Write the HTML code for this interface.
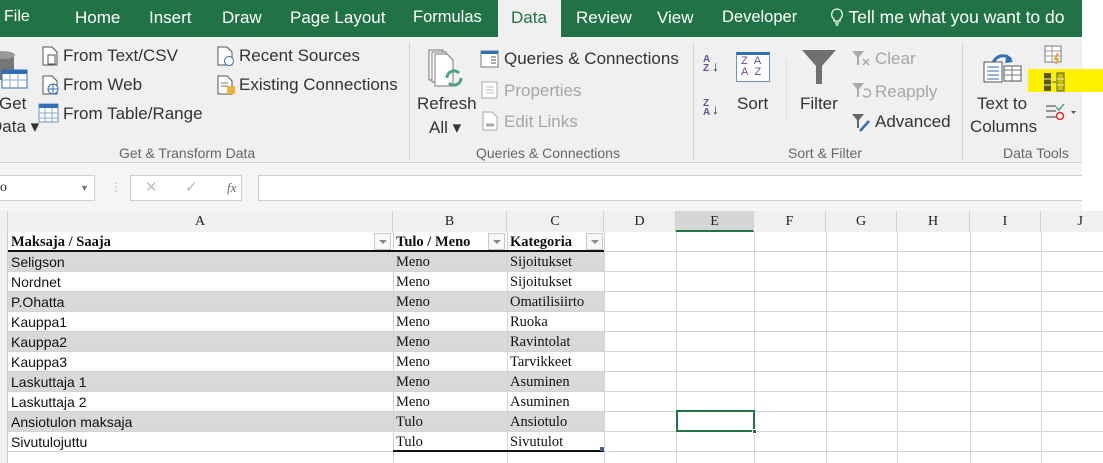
<!DOCTYPE html>
<html><head><meta charset="utf-8"><style>
*{margin:0;padding:0;box-sizing:border-box}
body{width:1103px;height:463px;overflow:hidden;background:#fff;position:relative;font-family:"Liberation Sans",sans-serif}
.a{position:absolute;white-space:nowrap}
.tab{position:absolute;top:8px;color:#fff;font-size:16px}
.rt{font-size:17px;color:#333}
.dis{color:#a6a6a6}
.gl{font-size:14px;color:#666}
.vs{position:absolute;width:1px;background:#d5d5d5;top:42px;height:118px}
.ch{position:absolute;top:211px;height:21px;font-family:"Liberation Serif",serif;font-size:14px;color:#222;text-align:center;line-height:22px;border-right:1px solid #d0d0d0;background:#f0f0f0}
.vl{position:absolute;top:232px;width:1px;height:231px;background:#d4d4d4}
.hl{position:absolute;left:8px;width:1095px;height:1px;background:#d4d4d4}
.c{position:absolute;font-size:14px;color:#111;line-height:20px;height:20px}
.ar{font-family:"Liberation Sans",sans-serif}
.sr{font-family:"Liberation Serif",serif;font-size:14.5px}
.bar{position:absolute;height:20px;background:#d9d9d9}
.dd{position:absolute;width:17px;height:17px;border:1px solid #c8c8c8;background:#f7f7f7}
.dd:after{content:"";position:absolute;left:4px;top:6px;border:4px solid transparent;border-top:4px solid #888}
</style></head><body>
<!-- tab bar -->
<div class="a" style="left:0;top:0;width:1082px;height:37px;background:#217346"></div>
<div class="a" style="left:498px;top:0;width:63px;height:38px;background:#f0f0f0"></div>
<div class="tab" style="left:4px">File</div>
<div class="tab" style="left:75px;font-size:17px">Home</div>
<div class="tab" style="left:149px;font-size:17px">Insert</div>
<div class="tab" style="left:222px;font-size:17px">Draw</div>
<div class="tab" style="left:290px;font-size:17px">Page Layout</div>
<div class="tab" style="left:413px;font-size:16.5px">Formulas</div>
<div class="tab" style="left:511px;color:#217346;font-size:17px">Data</div>
<div class="tab" style="left:576px;font-size:17px">Review</div>
<div class="tab" style="left:657px;font-size:17px">View</div>
<div class="tab" style="left:722px;font-size:16.5px">Developer</div>
<div class="tab" style="left:830px;font-size:17.5px;top:7px"><svg width="14" height="18" viewBox="0 0 14 18" style="vertical-align:-3px"><path d="M7 1a5.5 5.5 0 0 0-3 10v2h6v-2a5.5 5.5 0 0 0-3-10z" fill="none" stroke="#fff" stroke-width="1.3"/><path d="M5 15h4M5.5 17h3" stroke="#fff" stroke-width="1.2"/></svg> Tell me what you want to do</div>
<!-- ribbon -->
<div class="a" style="left:0;top:37px;width:1082px;height:126px;background:#f0f0f0;border-bottom:1px solid #d4d4d4"></div>
<div class="vs" style="left:409px"></div><div class="vs" style="left:693px"></div><div class="vs" style="left:962px"></div>
<!-- get data -->
<svg class="a" style="left:0;top:50px" width="28" height="42"><rect x="-12" y="4" width="26" height="26" fill="#777"/><ellipse cx="1" cy="5" rx="14" ry="4" fill="#999"/><rect x="2" y="20" width="25" height="18" fill="#fff" stroke="#2f6fb5"/><rect x="2" y="20" width="25" height="4" fill="#2f6fb5"/><path d="M2 30h25M10 24v14M18 24v14" stroke="#8aa8d0"/></svg>
<div class="a rt" style="left:-1px;top:94px">Get</div>
<div class="a rt" style="left:-10px;top:117px">Data ▾</div>
<svg class="a" style="left:41px;top:46px" width="18" height="20"><path d="M2 1h9l5 5v13H2z" fill="#fff" stroke="#555"/><path d="M7 9h7v9H7z" fill="none" stroke="#555"/></svg>
<div class="a rt" style="left:63px;top:46px">From Text/CSV</div>
<svg class="a" style="left:41px;top:75px" width="18" height="20"><path d="M2 1h9l5 5v13H2z" fill="#fff" stroke="#555"/><circle cx="12" cy="14" r="5" fill="#fff" stroke="#2f6fb5"/><path d="M7 14h10M12 9v10" stroke="#2f6fb5"/></svg>
<div class="a rt" style="left:63px;top:75px">From Web</div>
<svg class="a" style="left:38px;top:103px" width="21" height="20"><rect x="1" y="1" width="19" height="18" fill="#fff" stroke="#6b8fc5"/><rect x="1" y="1" width="19" height="4" fill="#2f6fb5"/><path d="M1 10h19M1 15h19M7 5v14M14 5v14" stroke="#8aa8d0"/></svg>
<div class="a rt" style="left:63px;top:104px">From Table/Range</div>
<svg class="a" style="left:216px;top:46px" width="20" height="20"><path d="M2 1h9l5 5v13H2z" fill="#fff" stroke="#555"/><circle cx="13" cy="15" r="4.5" fill="#fff" stroke="#2f6fb5"/></svg>
<div class="a rt" style="left:239px;top:46px">Recent Sources</div>
<svg class="a" style="left:216px;top:75px" width="20" height="20"><path d="M2 1h9l5 5v13H2z" fill="#fff" stroke="#555"/><path d="M5 8h7M5 11h7" stroke="#777"/><rect x="11" y="11" width="8" height="8" fill="#f0b040"/></svg>
<div class="a rt" style="left:239px;top:75px">Existing Connections</div>
<div class="a gl" style="left:119px;top:145px">Get &amp; Transform Data</div>
<!-- queries -->
<svg class="a" style="left:427px;top:48px" width="40" height="42"><path d="M2 2h14v30H2z" fill="#fff" stroke="#777"/><path d="M5 4h14v30H5z" fill="#fff" stroke="#777"/><path d="M8 6h12l6 6v26H8z" fill="#fff" stroke="#777"/><path d="M20 30a7 7 0 0 1 12-5M34 30a7 7 0 0 1-12 5" fill="none" stroke="#4aa37e" stroke-width="3"/></svg>
<div class="a rt" style="left:417px;top:94px">Refresh</div>
<div class="a rt" style="left:429px;top:118px">All ▾</div>
<svg class="a" style="left:480px;top:50px" width="19" height="18"><rect x="1" y="1" width="17" height="16" fill="#fff" stroke="#777"/><rect x="1" y="1" width="17" height="3" fill="#2f6fb5"/><path d="M11 7h5M11 10h5M11 13h5" stroke="#555"/></svg>
<div class="a rt" style="left:504px;top:49px">Queries &amp; Connections</div>
<svg class="a" style="left:481px;top:81px" width="18" height="18"><rect x="1" y="1" width="15" height="16" fill="#fff" stroke="#aaa"/><path d="M5 6h8M5 9h8M5 12h8" stroke="#bbb"/></svg>
<div class="a rt dis" style="left:504px;top:81px">Properties</div>
<svg class="a" style="left:481px;top:111px" width="18" height="20"><path d="M2 1h9l5 5v13H2z" fill="#fff" stroke="#aaa"/><path d="M5 14h8" stroke="#aaa" stroke-width="3"/></svg>
<div class="a rt dis" style="left:504px;top:112px">Edit Links</div>
<div class="a gl" style="left:476px;top:145px">Queries &amp; Connections</div>
<!-- sort filter -->
<div class="a" style="left:703px;top:55px;font-size:10px;line-height:9px;color:#6b4c9a;font-weight:bold">A<br>Z</div><div class="a" style="left:712px;top:58px;font-size:14px;color:#333">↓</div>
<div class="a" style="left:703px;top:99px;font-size:10px;line-height:9px;color:#6b4c9a;font-weight:bold">Z<br>A</div><div class="a" style="left:712px;top:101px;font-size:14px;color:#333">↓</div>
<div class="a" style="left:736px;top:52px;width:34px;height:30px;border:1px solid #6b8fc5;border-top:3px solid #2f6fb5;background:#fff;font-size:11px;line-height:11px;color:#6b4c9a;padding:1px 0 0 4px">Z&nbsp;&nbsp;A<br>A&nbsp;&nbsp;Z</div>
<div class="a rt" style="left:737px;top:94px">Sort</div>
<div class="a" style="left:786px;top:60px;width:1px;height:60px;background:#ddd"></div>
<svg class="a" style="left:801px;top:48px" width="36" height="38"><path d="M1 2h34L21 18v18h-6V18z" fill="#707070"/></svg>
<div class="a rt" style="left:800px;top:94px">Filter</div>
<svg class="a" style="left:851px;top:49px" width="22" height="20"><path d="M1 2h12l-5 6v8h-2V8z" fill="#aaa"/><path d="M12 10l6 6M18 10l-6 6" stroke="#aaa" stroke-width="1.5"/></svg>
<div class="a rt dis" style="left:875px;top:49px">Clear</div>
<svg class="a" style="left:851px;top:81px" width="22" height="20"><path d="M1 2h12l-5 6v8h-2V8z" fill="#aaa"/><path d="M12 14a4 4 0 1 0 1-5" fill="none" stroke="#aaa" stroke-width="1.5"/></svg>
<div class="a rt dis" style="left:875px;top:82px">Reapply</div>
<svg class="a" style="left:851px;top:112px" width="22" height="20"><path d="M1 2h12l-5 6v8h-2V8z" fill="#666"/><path d="M9 19l9-10" stroke="#2f6fb5" stroke-width="2.5"/></svg>
<div class="a rt" style="left:875px;top:112px">Advanced</div>
<div class="a gl" style="left:788px;top:145px">Sort &amp; Filter</div>
<!-- data tools -->
<svg class="a" style="left:983px;top:48px" width="42" height="36"><path d="M10 16a10 10 0 0 1 18-4" fill="none" stroke="#2f6fb5" stroke-width="3"/><path d="M24 6l6 8-8 1z" fill="#2f6fb5"/><rect x="1" y="14" width="18" height="20" fill="#fff" stroke="#555"/><path d="M4 19h12M4 23h12M4 27h12M4 31h12" stroke="#2f6fb5"/><rect x="21" y="18" width="17" height="15" fill="#fff" stroke="#555"/><path d="M21 22h17M29 18v15M21 27h17" stroke="#777"/></svg>
<div class="a rt" style="left:977px;top:94px">Text to</div>
<div class="a rt" style="left:970px;top:117px">Columns</div>
<div class="a" style="left:1028px;top:69px;width:75px;height:23px;background:#fff200"></div>
<svg class="a" style="left:1044px;top:45px" width="20" height="20"><rect x="1" y="1" width="16" height="16" fill="#fff" stroke="#777"/><path d="M1 6h16M1 11h16M8 1v16" stroke="#999"/><path d="M14 8l-3 6h3l-2 5" stroke="#e8a23c" stroke-width="2" fill="none"/></svg>
<svg class="a" style="left:1043px;top:72px" width="22" height="20"><rect x="1" y="1" width="7" height="18" fill="#5a5a20"/><rect x="14" y="1" width="7" height="18" fill="#c8c000" stroke="#555"/><path d="M1 7h7M1 13h7M14 7h7M14 13h7" stroke="#eee"/><path d="M9 10h4" stroke="#555"/></svg>
<svg class="a" style="left:1045px;top:103px" width="32" height="18"><path d="M1 3h10M1 8h10M1 14h10" stroke="#777" stroke-width="1.5"/><path d="M11 4l3 3 5-6" stroke="#4aa37e" stroke-width="1.5" fill="none"/><circle cx="15" cy="13" r="3.5" fill="none" stroke="#d33" stroke-width="1.5"/><path d="M26 8h5l-2.5 3z" fill="#555"/></svg>
<div class="a gl" style="left:1003px;top:145px">Data Tools</div>
<!-- formula bar -->
<div class="a" style="left:0;top:164px;width:1082px;height:47px;background:#f5f5f5"></div>
<div class="a" style="left:0;top:175px;width:95px;height:26px;background:#fff;border:1px solid #d0d0d0;border-left:none;font-size:14px;line-height:24px;color:#222;font-family:'Liberation Serif',serif">o<span style="position:absolute;left:80px;top:0;font-size:9px;color:#777">▼</span></div>
<div class="a" style="left:110px;top:180px;color:#bbb;font-size:12px">⋮</div>
<div class="a" style="left:130px;top:175px;width:112px;height:26px;background:#fff;border:1px solid #d0d0d0;color:#bbb;font-size:15px;line-height:24px"><span style="position:absolute;left:14px">✕</span><span style="position:absolute;left:54px">✓</span><span style="position:absolute;left:96px;color:#666;font-family:'Liberation Serif',serif;font-style:italic;font-size:13px">fx</span></div>
<div class="a" style="left:258px;top:175px;width:824px;height:26px;background:#fff;border:1px solid #d0d0d0;border-right:none"></div>
<!-- column headers -->
<div class="a" style="left:0;top:211px;width:1103px;height:21px;background:#f0f0f0;border-bottom:1px solid #bdbdbd"></div>
<div class="ch" style="left:0;width:8px"></div>
<div class="ch" style="left:8px;width:385px">A</div>
<div class="ch" style="left:393px;width:114px">B</div>
<div class="ch" style="left:507px;width:97px">C</div>
<div class="ch" style="left:604px;width:72px">D</div>
<div class="ch" style="left:676px;width:78px;background:#d6d6d6;border-bottom:2px solid #217346">E</div>
<div class="ch" style="left:754px;width:72px">F</div>
<div class="ch" style="left:826px;width:71px">G</div>
<div class="ch" style="left:897px;width:73px">H</div>
<div class="ch" style="left:970px;width:71px">I</div>
<div class="ch" style="left:1041px;width:62px;text-align:right;padding-right:20px;border:none">J</div>
<div class="a" style="left:0;top:232px;width:8px;height:231px;background:#f0f0f0;border-right:1px solid #c8c8c8"></div>
<!-- banded rows -->
<div class="bar" style="left:8px;top:252px;width:596px"></div>
<div class="bar" style="left:8px;top:292px;width:596px"></div>
<div class="bar" style="left:8px;top:332px;width:596px"></div>
<div class="bar" style="left:8px;top:372px;width:596px"></div>
<div class="bar" style="left:8px;top:412px;width:596px"></div>
<!-- grid lines -->
<div class="vl" style="left:393px"></div><div class="vl" style="left:507px"></div><div class="vl" style="left:604px"></div><div class="vl" style="left:676px"></div><div class="vl" style="left:754px"></div><div class="vl" style="left:826px"></div><div class="vl" style="left:897px"></div><div class="vl" style="left:970px"></div><div class="vl" style="left:1041px"></div>
<div class="hl" style="top:251px"></div><div class="hl" style="top:271px"></div><div class="hl" style="top:291px"></div><div class="hl" style="top:311px"></div><div class="hl" style="top:331px"></div><div class="hl" style="top:351px"></div><div class="hl" style="top:371px"></div><div class="hl" style="top:391px"></div><div class="hl" style="top:411px"></div><div class="hl" style="top:431px"></div><div class="hl" style="top:451px"></div>
<div class="a" style="left:8px;top:250px;width:596px;height:2px;background:#111"></div>
<div class="a" style="left:393px;top:450px;width:211px;height:2px;background:#111"></div>
<div class="a" style="left:600px;top:447px;width:4px;height:4px;background:#4a5aa0"></div>
<!-- header row -->
<div class="c sr" style="left:11px;top:232px;font-weight:bold">Maksaja / Saaja</div>
<div class="c sr" style="left:396px;top:232px;font-weight:bold">Tulo / Meno</div>
<div class="c sr" style="left:510px;top:232px;font-weight:bold">Kategoria</div>
<div class="dd" style="left:374px;top:233px"></div>
<div class="dd" style="left:488px;top:233px"></div>
<div class="dd" style="left:586px;top:233px"></div>
<!-- data -->
<div class="c ar" style="left:11px;top:252px">Seligson</div><div class="c sr" style="left:396px;top:252px">Meno</div><div class="c sr" style="left:510px;top:252px">Sijoitukset</div>
<div class="c ar" style="left:11px;top:272px">Nordnet</div><div class="c sr" style="left:396px;top:272px">Meno</div><div class="c sr" style="left:510px;top:272px">Sijoitukset</div>
<div class="c ar" style="left:11px;top:292px">P.Ohatta</div><div class="c sr" style="left:396px;top:292px">Meno</div><div class="c sr" style="left:510px;top:292px">Omatilisiirto</div>
<div class="c ar" style="left:11px;top:312px">Kauppa1</div><div class="c sr" style="left:396px;top:312px">Meno</div><div class="c sr" style="left:510px;top:312px">Ruoka</div>
<div class="c ar" style="left:11px;top:332px">Kauppa2</div><div class="c sr" style="left:396px;top:332px">Meno</div><div class="c sr" style="left:510px;top:332px">Ravintolat</div>
<div class="c ar" style="left:11px;top:352px">Kauppa3</div><div class="c sr" style="left:396px;top:352px">Meno</div><div class="c sr" style="left:510px;top:352px">Tarvikkeet</div>
<div class="c ar" style="left:11px;top:372px">Laskuttaja 1</div><div class="c sr" style="left:396px;top:372px">Meno</div><div class="c sr" style="left:510px;top:372px">Asuminen</div>
<div class="c ar" style="left:11px;top:392px">Laskuttaja 2</div><div class="c sr" style="left:396px;top:392px">Meno</div><div class="c sr" style="left:510px;top:392px">Asuminen</div>
<div class="c ar" style="left:11px;top:412px">Ansiotulon maksaja</div><div class="c sr" style="left:396px;top:412px">Tulo</div><div class="c sr" style="left:510px;top:412px">Ansiotulo</div>
<div class="c ar" style="left:11px;top:432px">Sivutulojuttu</div><div class="c sr" style="left:396px;top:432px">Tulo</div><div class="c sr" style="left:510px;top:432px">Sivutulot</div>
<!-- selection -->
<div class="a" style="left:676px;top:410px;width:79px;height:22px;border:2px solid #217346"></div>
<div class="a" style="left:752px;top:429px;width:5px;height:5px;background:#217346;border:1px solid #fff"></div>
</body></html>
